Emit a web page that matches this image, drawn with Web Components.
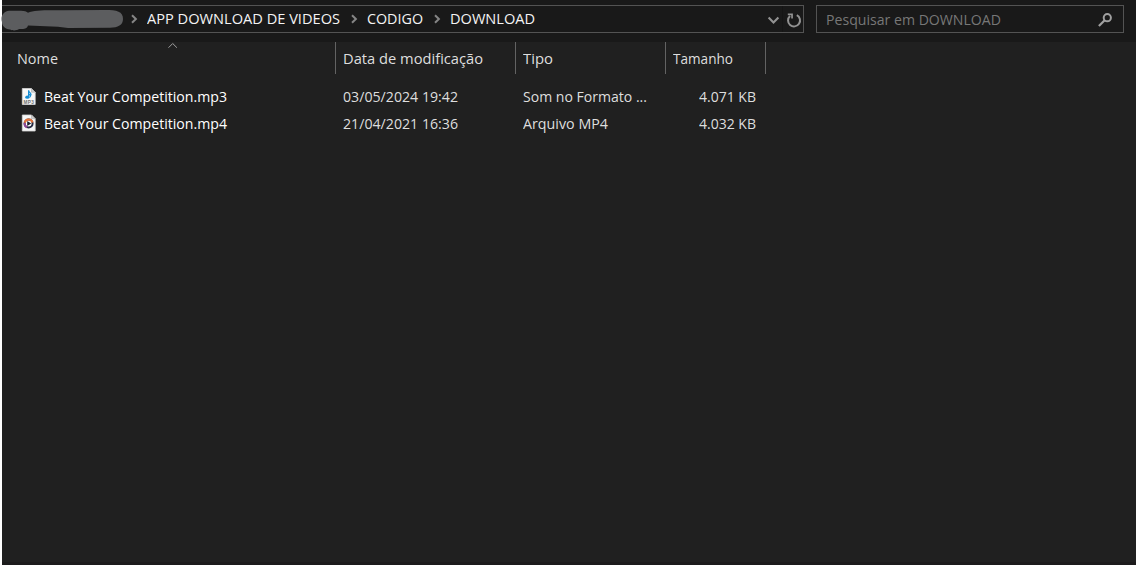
<!DOCTYPE html>
<html lang="pt-BR">
<head>
<meta charset="utf-8">
<title>DOWNLOAD</title>
<style>
html,body{margin:0;height:100%;overflow:hidden;background:#fff}
body{font-family:"Open Sans","Noto Sans",sans-serif;font-size:14.8px;color:#dedede}
</style>
</head>
<body>
<file-explorer></file-explorer>
<script>
function define(name, html, setup) {
  const t = document.createElement('template');
  t.innerHTML = html;
  customElements.define(name, class extends HTMLElement {
    connectedCallback() {
      if (this.shadowRoot) return;
      this.attachShadow({mode: 'open'}).append(t.content.cloneNode(true));
      if (setup) setup(this, this.shadowRoot);
    }
  });
}

/* A label condensed or widened to the width named in its "w" attribute. */
define('fit-label', `
<style>
:host{display:block;flex:none;line-height:18px;padding-bottom:2px;white-space:nowrap}
span{display:inline-block;transform-origin:0 50%}
</style><span><slot></slot></span>`, (host, root) => {
  const s = root.querySelector('span'), w = +host.getAttribute('w');
  host.style.width = w + 'px';
  s.style.transform = 'scaleX(' + w / s.getBoundingClientRect().width + ')';
});

define('path-chevron', `
<style>:host{display:block;flex:none;width:7px;height:10px}svg{display:block}</style>
<svg width="7" height="10" viewBox="0 0 7 10"><path d="M1 1.2 4.9 5 1 8.8" fill="none" stroke="#858585" stroke-width="2"/></svg>`);

define('address-bar', `
<style>
:host{display:flex;box-sizing:border-box;width:802px;height:28px;border:1px solid #535353;border-left:0;background:#191919;color:#f4f4f4;align-items:center}
.redact{flex:none;margin:-1px 7px 0 -1px;display:block}
path-chevron{margin-top:0}
.a{margin-left:9px}.b{margin:0 9px 0 11px}.c{margin:0 9px 0 11px}
.end{margin-left:auto;display:flex;align-items:center;height:26px}
.refresh{width:20px;height:26px;border-left:1px solid #151515;display:block}
.down{margin:2px 2px 0 0}
svg{display:block}
</style>
<svg class="redact" width="123" height="24" viewBox="0 0 123 24"><path d="M1 15C-1 9 3 4 8 3.7L20 3.7q5 0 7 2C33 2.7 47 3.2 61 3.2L104 3c12 0 18 1.500 18 9 0 6-5 8.700-13 8.700L67 21l-10-1.300L27 18.500c-1 4-6 3.500-9 3.500-3 2-7 1.500-9 .5-5-.5-8-3.500-8-7.500Z" fill="#5c5d5f"/></svg>
<path-chevron></path-chevron>
<fit-label class="a" w="193">APP DOWNLOAD DE VIDEOS</fit-label>
<path-chevron class="b"></path-chevron>
<fit-label w="56">CODIGO</fit-label>
<path-chevron class="c"></path-chevron>
<fit-label w="85">DOWNLOAD</fit-label>
<div class="end">
<svg class="down" width="13" height="10" viewBox="0 0 13 10"><path d="m1.6 2.5 4.9 5 4.9-5" fill="none" stroke="#929292" stroke-width="2.1"/></svg>
<svg class="refresh" viewBox="-.8 -.3 20 26"><path d="M13 8.8A6 6 0 1 1 6.200 9.700" fill="none" stroke="#929292" stroke-width="2"/><path d="M4 7.200V8.900H7.400V12.300H9.100V7.200Z" fill="#929292"/></svg>
</div>`);

define('search-box', `
<style>
:host{display:flex;box-sizing:border-box;width:308px;height:28px;border:1px solid #535353;background:#191919;color:#777;align-items:center;justify-content:space-between;padding:1px 11px 0 9px}
svg{display:block}
</style>
<fit-label w="175">Pesquisar em DOWNLOAD</fit-label>
<svg width="14" height="14" viewBox="0 0 14 14" fill="none" stroke="#a0a0a0"><circle cx="9.3" cy="4.7" r="3.6" stroke-width="2"/><path d="M6.4 7.500.9 13" stroke-width="2.200"/></svg>`);

define('column-header', `
<style>
:host{display:flex;box-sizing:border-box;position:relative;height:32px;border-right:1px solid #636363;padding:7px 0 0 7px}
svg{position:absolute;left:166px;top:0}
</style><slot></slot>`, (host, root) => {
  if (host.hasAttribute('sorted'))
    root.innerHTML += '<svg width="10" height="7" viewBox="0 0 10 7"><path d="M.5 5.700 4.700 1.500l4.200 4.200" fill="none" stroke="#a0a0a0" stroke-width="1"/></svg>';
});

define('file-icon', `<style>:host{display:block;flex:none;width:15px;height:18px}svg{display:block}</style><div></div>`, (host, root) => {
  const mp3 = host.getAttribute('kind') === 'mp3';
  const page = '<path d="M1.300.500h9.200l3.700 3.700v12.300H1.300Z" fill="#f7f7f7" stroke="#d4d4d4" stroke-width=".8"/><path d="M10.500.500v3.700h3.700Z" fill="#cfcfcf" stroke="#a8a8a8" stroke-width=".6"/>';
  const art = mp3
    ? '<ellipse cx="6.300" cy="9.200" rx="2.100" ry="1.600" fill="#168dd5"/><path d="M7.600 9V2.300q.4 1.700 1.900 2.900 1.200 1.400-.2 3.200.2-1.900-1.700-2.600" fill="none" stroke="#168dd5" stroke-width="1.200"/><text x="7.700" y="15.600" text-anchor="middle" textLength="10.500" font-family="Liberation Sans,sans-serif" font-size="4.700" font-weight="700" fill="#707070">MP3</text>'
    : '<circle cx="7.600" cy="9" r="4" fill="#fff" stroke="#252b43" stroke-width="2"/><path d="M3.700 8.200A4 4 0 0 1 11.500 8" fill="none" stroke="#e7753b" stroke-width="2"/><path d="M3.600 8.500a4 4 0 0 0 2.500 4.200" fill="none" stroke="#8e4795" stroke-width="2"/><path d="m6.200 6.500 4 2.500-4 2.500Z" fill="#1b2030"/>';
  root.querySelector('div').innerHTML = '<svg width="15" height="18" viewBox="0 ' + (mp3 ? 0 : .5) + ' 15 18" overflow="visible">' + page + art + '</svg>';
});

define('file-row', `
<style>
:host{display:grid;grid-template-columns:334px 180px 150px 90px;height:27px;align-items:center}
.name{display:flex;align-items:center;padding-left:19px;gap:8px;color:#fff}
.cell{padding-left:7px}.size{display:flex;justify-content:flex-end}
</style>
<div class="name"><slot name="icon"></slot><slot name="name"></slot></div>
<div class="cell"><slot name="date"></slot></div>
<div class="cell"><slot name="type"></slot></div>
<div class="size"><slot name="size"></slot></div>`);

define('file-list', `
<style>
:host{display:block;height:523px;box-sizing:border-box;background:#202020;border-bottom:3px solid #1c1b1c}
.head{display:grid;grid-template-columns:334px 180px 150px 100px;height:41px}
.first{padding-left:15px}
</style>
<div class="head">
<column-header class="first" sorted><fit-label w="41">Nome</fit-label></column-header>
<column-header><fit-label w="140">Data de modificação</fit-label></column-header>
<column-header><fit-label w="30">Tipo</fit-label></column-header>
<column-header><fit-label w="60">Tamanho</fit-label></column-header>
</div>
<file-row>
<file-icon slot="icon" kind="mp3"></file-icon><fit-label slot="name" w="183">Beat Your Competition.mp3</fit-label>
<fit-label slot="date" w="115">03/05/2024 19:42</fit-label><fit-label slot="type" w="124">Som no Formato ...</fit-label><fit-label slot="size" w="57">4.071 KB</fit-label>
</file-row>
<file-row>
<file-icon slot="icon" kind="mp4"></file-icon><fit-label slot="name" w="183">Beat Your Competition.mp4</fit-label>
<fit-label slot="date" w="115">21/04/2021 16:36</fit-label><fit-label slot="type" w="85">Arquivo MP4</fit-label><fit-label slot="size" w="57">4.032 KB</fit-label>
</file-row>`);

define('file-explorer', `
<style>
:host{display:block;margin-left:2px;width:1134px;height:565px;background:#191919}
.bar{display:flex;gap:12px;height:42px;box-sizing:border-box;padding-top:5px}
</style>
<div class="bar"><address-bar></address-bar><search-box></search-box></div>
<file-list></file-list>`);
</script>
</body>
</html>
